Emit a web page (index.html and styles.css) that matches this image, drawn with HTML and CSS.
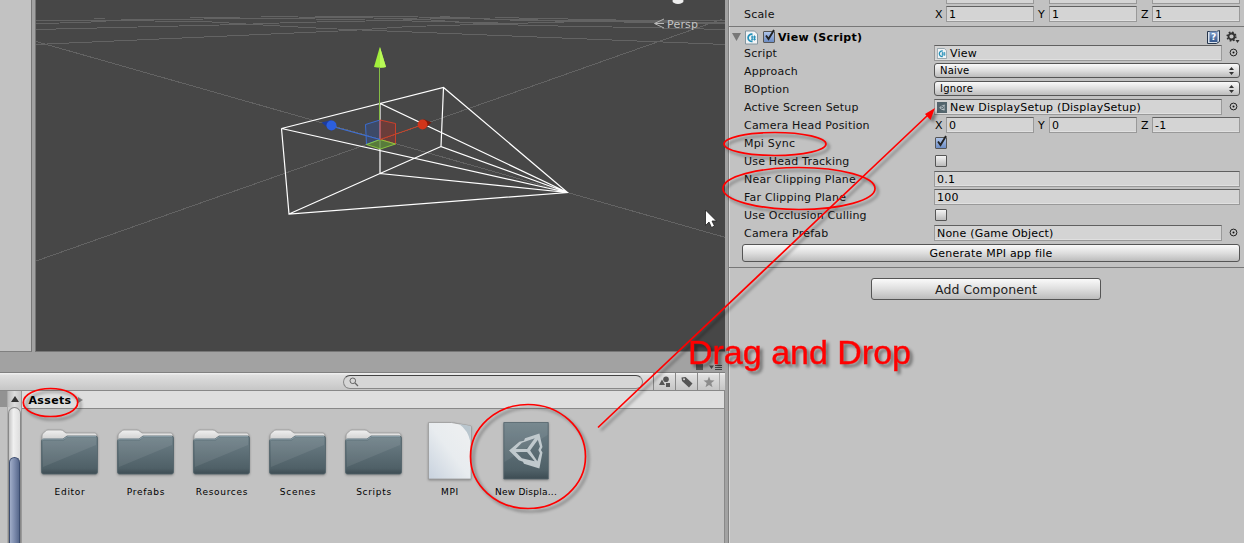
FILE: index.html
```html
<!DOCTYPE html>
<html lang="en">
<head>
<meta charset="utf-8">
<title>Editor</title>
<link rel="stylesheet" href="styles.css">
</head>
<body>
<svg class="defs" width="0" height="0">
  <defs>
    <linearGradient id="slate" x1="0" y1="0" x2="0" y2="1"><stop offset="0" stop-color="#6e8088"/><stop offset=".85" stop-color="#4f6067"/><stop offset="1" stop-color="#3d4c53"/></linearGradient>
    <linearGradient id="tab" x1="0" y1="0" x2="0" y2="1"><stop offset="0" stop-color="#f0f0f0"/><stop offset=".3" stop-color="#c6c6c6"/></linearGradient>
    <linearGradient id="paper" x1="1" y1="0" x2="0" y2="1"><stop offset="0" stop-color="#eff0f1"/><stop offset=".5" stop-color="#e8ecef"/><stop offset="1" stop-color="#c8d2de"/></linearGradient>
    <linearGradient id="book" x1="0" y1="0" x2="0" y2="1"><stop offset="0" stop-color="#82a0cc"/><stop offset="1" stop-color="#35578c"/></linearGradient>
    <symbol id="folder" viewBox="0 0 60 50">
      <path d="M2 44V8q0-1.500 1-2.500L5.500 3Q6.500 2 8 2h13q2 0 3 1.500L26 5h29q2 0 2 3v36z" fill="url(#tab)" stroke="#999" stroke-width=".8"/>
      <path d="M1.500 13q0-2 2-2H23l4-3h28.500q2 0 2 2v34q0 2-2 2h-52q-2 0-2-2z" fill="url(#slate)" stroke="#52636b" stroke-width=".8"/>
      <path d="M3 39V13h20.500l4-3.500H56V17z" fill="#fff" opacity=".08"/>
      <path d="M2 12q1-.8 2-.8h19.500l4-2.700H56" fill="none" stroke="#8fa3ad" stroke-width=".8"/>
    </symbol>
    <symbol id="unity" viewBox="0 0 34 36">
      <path d="M1.500 18 11.500 9.500 16 8.500 17 6 31 1.500 34 14.500 32.500 17.500 34 20 31 35.500 16 31 15 29 11 27.500z M6.500 18 14 25.500 26.500 28.500 19 19.500H8z M8 16.500H19L26.500 6 14 10.500z M22 18 29 28.500 31.500 20.500 30 17.500 31.500 14 29.500 7.500z" fill="#c0c9cd" fill-rule="evenodd"/>
    </symbol>
    <symbol id="cs" viewBox="0 0 13 14">
      <path d="M.5.5h9l3 3v10H.5z" fill="#f2f4f6" stroke="#8296a0"/>
      <path d="M7.500 3.800A3.600 3.600 0 1 0 7.500 10.800" fill="none" stroke="#2490b8" stroke-width="1.700"/>
      <path d="M7.200 5v5M9.500 5v5M6 6.500h5M6 8.700h5" stroke="#2490b8" stroke-width="1"/>
    </symbol>
    <symbol id="tick" viewBox="0 0 12 13"><path d="M2.500 6.500 5 10 10.500 1" fill="none" stroke="#222" stroke-width="1.900"/></symbol>
    <symbol id="target" viewBox="0 0 9 9"><circle cx="4.500" cy="4.500" r="3.400" fill="none" stroke="#222"/><circle cx="4.500" cy="4.500" r="1" fill="#111"/></symbol>
    <symbol id="updown" viewBox="0 0 5 8"><path d="M0 3 2.500 0 5 3zM0 5h5L2.500 8z" fill="#333"/></symbol>
  </defs>
</svg>

<div class="editor">
  <div class="left">
    <div class="upper">
      <div class="hierarchy"></div>
      <svg class="scene" viewBox="36 0 689 351" width="689" height="351">
        <g class="grid">
          <path d="M36 41.500 725 237.300M36 261 722 19.200"/>
          <path d="M36 44.500 350 30.500M374 30.500 725 44.500M36 29.500 240 24.500 293 22.500 390 20.500 470 17.500"/>
          <path d="M36 20.500H105L203 21.500 280 26 325 28.500 374 30.500M36 23.500 84 22.500 129 19.500 280 18.500 390 16.500"/>
          <path d="M350 30.500 410 26.500 510 23.500 620 20.500M94 18.500H105M261 16.500 410 18.500 480 23.500 530 25.500 640 27.500 725 29.500"/>
          <path d="M190 17.500 290 18.500 390 20.500 520 23.500M315 16.500H402L500 19.500 725 22.500M440 16.500 520 20.500 725 23.500M495 17.500 640 20.500H725"/>
        </g>
        <path class="wire" d="M567.500 192.500 281.500 128.500 443.500 87.500 567.500 192.500 289 214 281.500 128.500M443.500 87.500 441 146.500 567.500 192.500 380 173.500V103.500L567.500 192.500M289 214 380 173.500 441 146.500"/>
        <path d="M365.500 124.500 380 120v19.500l-13.500 5z" fill="#2f4f9c" fill-opacity=".4" stroke="#3a70dc" stroke-width=".9"/>
        <path d="m380 120 15.500 3.500V144L380 139.500z" fill="#a03028" fill-opacity=".4" stroke="#d84028" stroke-width=".9"/>
        <path d="m366.500 144.500 13.500-5 15.500 4.500-15 5z" fill="#5c8838" fill-opacity=".8" stroke="#90d040" stroke-width=".9"/>
        <path d="M379.500 68v52" stroke="#86bd46"/>
        <path d="M336 127.500 380 139.500" stroke="#3b70dc"/><path d="M380 139.500 419 126" stroke="#cc4023"/>
        <path d="M379.800 47 374 67q6 1.500 12 0z" fill="#a2ee3c"/><path d="M380 47v20.500q4 0 6-.5z" fill="#b9fa57"/>
        <path d="m321.500 122.500 10-2.500v11z" fill="#1c3ca0"/><circle cx="331.500" cy="125.500" r="5" fill="#2c5fe0"/>
        <path d="m431.500 122.500-8-3.500v11z" fill="#7c1a0c"/><circle cx="422.500" cy="124.500" r="4.900" fill="#d2351a"/>
        <ellipse cx="678" cy="1" rx="5.500" ry="3" fill="#eee"/>
        <path d="M664 19 654.500 23.500 664 28M655 23.500h9" fill="none" stroke="#b8b8b8"/>
        <text class="persp" x="667" y="28" textLength="31">Persp</text>
        <path d="M705.500 210v15.500l3.500-3.500 2.500 5.500 3-1.500-2.500-5h4.500z" fill="#fff" stroke="#222" stroke-width=".8"/>
      </svg>
    </div>
    <div class="strip">
      <svg width="26" height="14" viewBox="0 0 26 14"><path d="M0 6h7v6H0z" fill="#555"/><path d="M13 7.500h5L15.500 11z" fill="#444"/><path d="M19 7.500h8M19 9.500h8M19 11.500h8" stroke="#444"/></svg>
    </div>
    <div class="toolbar">
      <div class="search"><svg width="10" height="10" viewBox="0 0 10 10"><circle cx="3.800" cy="3.800" r="2.800" fill="none" stroke="#666"/><path d="m6 6 3 3" stroke="#666" stroke-width="1.300"/></svg></div>
      <div class="filters">
        <span><svg width="12" height="12" viewBox="0 0 12 12"><circle cx="7" cy="3.200" r="2.800" fill="#555"/><path d="M0 9 3 3.500 6 9zM7 7h4v4H7z" fill="#555"/></svg></span>
        <span><svg width="12" height="12" viewBox="0 0 12 12"><path fill-rule="evenodd" d="M.5 1.500 4.500 1l7 6.500-3.500 4-7-6.500zM3 2.200a1 1 0 1 0 .1 2 1 1 0 0 0-.1-2" fill="#555"/></svg></span>
        <span><svg width="12" height="12" viewBox="0 0 12 12"><path d="m6 .5 1.500 3.800 4 .2-3.200 2.600 1.200 4.100L6 8.900l-3.500 2.300 1.200-4.100L.5 4.500l4-.2z" fill="#8c8c8c"/></svg></span>
      </div>
    </div>
    <div class="project">
      <div class="tree"></div>
      <div class="scroll"><div class="up"><svg width="8" height="6" viewBox="0 0 8 6"><path d="M4 0 8 6H0z" fill="#333"/></svg></div><div class="track"><div class="thumb"></div></div></div>
      <div class="browser">
        <div class="crumb"><b>Assets</b><svg width="5" height="6" viewBox="0 0 5 6"><path d="M0 0 5 3 0 6z" fill="#888"/></svg></div>
        <div class="assets">
          <div class="asset"><svg class="fold"><use href="#folder"/></svg><span>Editor</span></div>
          <div class="asset"><svg class="fold"><use href="#folder"/></svg><span>Prefabs</span></div>
          <div class="asset"><svg class="fold"><use href="#folder"/></svg><span>Resources</span></div>
          <div class="asset"><svg class="fold"><use href="#folder"/></svg><span>Scenes</span></div>
          <div class="asset"><svg class="fold"><use href="#folder"/></svg><span>Scripts</span></div>
          <div class="asset"><svg class="file" viewBox="0 0 46 60"><path d="M1.500 1.500h23l19.500 3.500v53H1.500z" fill="url(#paper)" stroke="#999" stroke-width=".8"/><path d="M32 3 43.500 5v16Q41 9 32 3" fill="#b9c6ce"/></svg><span>MPI</span></div>
          <div class="asset cut"><svg class="file" viewBox="0 0 46 60"><path d="M.8 1.500h44.500v56.500H.8z" fill="url(#slate)" stroke="#56666d" stroke-width=".8"/><path d="M1.500 41V2h43v12z" fill="#fff" opacity=".07"/><use href="#unity" x="4" y="11" width="36" height="37"/></svg><span>New Displa...</span></div>
        </div>
      </div>
    </div>
  </div>
  <div class="inspector">
    <div class="clip"><p></p><p></p><p></p></div>
    <div class="row"><span>Scale</span><div class="vec"><i>X</i><p>1</p><i>Y</i><p>1</p><i>Z</i><p>1</p></div></div>
    <div class="head">
      <svg width="9" height="8" viewBox="0 0 9 8"><path d="M0 0h9L4.500 8z" fill="#777"/></svg>
      <svg width="13" height="15"><use href="#cs"/></svg>
      <em class="box on"><svg><use href="#tick"/></svg></em>
      <b>View (Script)</b>
      <svg class="help" width="13" height="14" viewBox="0 0 13 14"><path d="M.5 1.500h9l3-1v11l-3 2h-9z" fill="#d8e0ea" stroke="#26364c"/><path d="M2.500 1.500h8v10.500h-8z" fill="url(#book)"/><text x="4" y="10" class="q">?</text></svg>
      <svg width="14" height="13" viewBox="0 0 14 13"><circle cx="5.500" cy="5.500" r="3" fill="none" stroke="#333" stroke-width="1.800"/><circle cx="5.500" cy="5.500" r="4.300" fill="none" stroke="#333" stroke-width="1.600" stroke-dasharray="1.700 1.680"/><path d="M9.500 9h4l-2 3z" fill="#333"/></svg>
    </div>
    <div class="row"><span>Script</span><div class="obj"><p><svg width="10" height="11"><use href="#cs"/></svg>View</p><svg class="pick"><use href="#target"/></svg></div></div>
    <div class="row"><span>Approach</span><div class="pop">Naive<svg width="5" height="8"><use href="#updown"/></svg></div></div>
    <div class="row"><span>BOption</span><div class="pop">Ignore<svg width="5" height="8"><use href="#updown"/></svg></div></div>
    <div class="row"><span>Active Screen Setup</span><div class="obj"><p><svg width="10" height="11" viewBox="0 0 10 11"><path d="M0 0h10v11H0z" fill="#53656d"/><use href="#unity" x="2" y="2" width="6" height="7"/></svg>New DisplaySetup (DisplaySetup)</p><svg class="pick"><use href="#target"/></svg></div></div>
    <div class="row"><span>Camera Head Position</span><div class="vec"><i>X</i><p>0</p><i>Y</i><p>0</p><i>Z</i><p>-1</p></div></div>
    <div class="row"><span>Mpi Sync</span><em class="box on"><svg><use href="#tick"/></svg></em></div>
    <div class="row"><span>Use Head Tracking</span><em class="box"></em></div>
    <div class="row"><span>Near Clipping Plane</span><p>0.1</p></div>
    <div class="row"><span>Far Clipping Plane</span><p>100</p></div>
    <div class="row"><span>Use Occlusion Culling</span><em class="box"></em></div>
    <div class="row"><span>Camera Prefab</span><div class="obj"><p>None (Game Object)</p><svg class="pick"><use href="#target"/></svg></div></div>
    <div class="button gen">Generate MPI app file</div>
    <div class="rule"></div>
    <div class="button add">Add Component</div>
  </div>
</div>

<svg class="notes" width="1244" height="543">
  <g fill="none" stroke="#f00" stroke-width="1.700">
    <ellipse cx="50.500" cy="402.500" rx="27.200" ry="14"/>
    <ellipse cx="775" cy="144" rx="51" ry="11.500"/>
    <ellipse cx="799" cy="188.500" rx="76" ry="21"/>
    <ellipse cx="528" cy="456.500" rx="57.500" ry="52"/>
    <path d="M598 427.500 928 115"/>
  </g>
  <path d="m935 108-10 6 5.500 6z" fill="#f00"/>
  <text x="688" y="364" textLength="223">Drag and Drop</text>
</svg>
</body>
</html>
```

FILE: styles.css
```css
* { box-sizing: border-box; }
body { margin: 0; background: #a2a2a2; font: 11px "DejaVu Sans", sans-serif; color: #000; overflow: hidden; }
svg { display: block; flex: none; }
.defs { position: absolute; }
p, i, em { margin: 0; font-style: normal; }
.editor { display: flex; width: 1244px; height: 543px; overflow: hidden; }

.left { width: 725px; display: flex; flex-direction: column; }
.upper { display: flex; height: 352px; }
.hierarchy { width: 32px; background: #c2c2c2; border-right: 1px solid #777; border-bottom: 1px solid #808080; }
.scene { margin-left: 3px; border-left: 1px solid #777; border-bottom: 1px solid #777; width: 690px; height: 352px; background: #474747; }
.grid { fill: none; stroke: #636363; stroke-width: 1; shape-rendering: crispEdges; }
.wire { fill: none; stroke: #fff; stroke-width: 1.2; }
.persp { font-size: 11px; fill: #c4c4c4; }
.strip { height: 20px; display: flex; justify-content: flex-end; align-items: flex-end; padding-right: 3px; background: #a2a2a2; }

.toolbar { height: 19px; border-top: 1px solid #808080; border-bottom: 1px solid #888; background: linear-gradient(#f2f2f2, #dedede 15%, #c6c6c6); display: flex; align-items: center; justify-content: flex-end; }
.search { width: 300px; height: 14px; border: 1px solid #888; border-top-color: #444; border-radius: 7px; background: #d6d6d6; display: flex; align-items: center; padding-left: 5px; margin-right: 10px; }
.filters { display: flex; width: 72px; height: 17px; }
.filters span { width: 22px; border-left: 1px solid #888; display: flex; align-items: center; justify-content: center; }
.filters span:last-child { border-right: 1px solid #aaa; width: 23px; }

.project { flex: 1; display: flex; border-right: 1px solid #888; min-height: 0; overflow: hidden; }
.tree { width: 7px; background: linear-gradient(#929292 16px, #c2c2c2 16px); }
.scroll { width: 15px; border-left: 1px solid #aaa; border-right: 1px solid #999; background: #ccc; display: flex; flex-direction: column; }
.up { height: 16px; flex: none; display: flex; align-items: center; justify-content: center; background: linear-gradient(90deg, #bbb, #ddd, #c4c4c4); }
.track { flex: 1; border: 1px solid #888; border-bottom: 0; border-radius: 7px 7px 0 0; background: linear-gradient(90deg, #c4c4c4, #f0f0f0 40%, #ddd); padding-top: 49px; display: flex; }
.thumb { flex: 1; border: 1px solid #3c4d70; border-bottom: 0; border-radius: 6px 6px 0 0; background: linear-gradient(90deg, #a0adc8, #7988aa 55%, #58698c); }
.browser { flex: 1; background: #c2c2c2; }
.crumb { height: 18px; display: flex; align-items: center; gap: 7px; padding: 1px 0 0 6.500px; background: #dedede; border-bottom: 1px solid #888; letter-spacing: .35px; }
.assets { display: flex; padding: 12px 0 0 10px; }
.asset { width: 76px; display: flex; flex-direction: column; align-items: center; font-size: 9px; letter-spacing: .7px; }
.asset svg { margin-bottom: 5px; filter: drop-shadow(0 1px 1px #888); }
.asset span { line-height: 12px; white-space: nowrap; }
.cut span { letter-spacing: .25px; }
.asset .fold { width: 60px; height: 50px; margin: 7px 0 8px; }
.file { width: 46px; height: 60px; }

.inspector { flex: 1; margin-left: 3px; border-left: 1px solid #808080; background: #c2c2c2; box-shadow: inset 1px 0 #d8d8d8; letter-spacing: .2px; }
.row { height: 18px; display: grid; grid-template-columns: 190px 306px; padding-left: 15px; align-items: start; white-space: nowrap; }
.row > span { line-height: 18px; color: #111; }
.row p { height: 16px; border: 1px solid #999; border-top: 1px solid #606060; background: #d4d4d4; box-shadow: inset 0 -1px #e0e0e0; line-height: 15px; padding-left: 2px; display: flex; align-items: center; gap: 3px; }
.clip { height: 6px; display: grid; grid-template-columns: 88px 88px 88px; gap: 15px; padding-left: 217px; align-items: start; }
.clip p { height: 4px; border: 1px solid #999; border-top: 0; background: #d4d4d4; }
.clip + .row { height: 20px; }
.vec { display: grid; grid-template-columns: 12px 88px 15px 88px 15px 88px; line-height: 17px; }
.vec i { padding-left: 1px; }
.vec i:nth-child(n+2) { padding-left: 4px; }
.obj { display: grid; grid-template-columns: 288px 18px; }
.pick { width: 9px; height: 9px; margin: 3px 0 0 7px; }
.pop, .button { border: 1px solid #555; border-radius: 3px; background: linear-gradient(#fafafa, #dedede 50%, #bcbcbc); }
.pop { height: 15px; font-size: 10px; line-height: 13px; display: flex; justify-content: space-between; align-items: center; padding: 0 5px; }
.box { width: 12px; height: 12px; margin: 2px 0 0 1px; border: 1px solid #555; border-radius: 1px; background: linear-gradient(#f4f4f4, #bbb); display: block; }
.box svg { width: 13px; height: 13px; margin: -3px 0 0 -1px; }
.on { background: linear-gradient(#aec4ea, #6c8cc4); }
.head { height: 19px; border-top: 1px solid #777; display: flex; align-items: center; padding: 2px 4px 0 3px; letter-spacing: .3px; }
.head svg:nth-of-type(2) { margin-left: 4px; }
.head .box { margin: 0 3px 0 5px; }
.head .help { margin: 0 6px 0 auto; }
.q { font-size: 9px; fill: #fff; font-weight: bold; }
.button { text-align: center; }
.gen { width: 498px; height: 18px; margin: 1px 0 0 13px; line-height: 17px; }
.rule { height: 1px; background: #777; margin-top: 5px; }
.add { width: 230px; height: 22px; margin: 10px 0 0 142px; line-height: 21px; font-size: 12.5px; letter-spacing: .1px; color: #222; }

.notes { position: absolute; left: 0; top: 0; filter: drop-shadow(3px 3px 1.500px rgba(0,0,0,.4)); }
.notes text { font: 34px "Liberation Sans", sans-serif; fill: #f00; stroke: #f00; stroke-width: .4; }
```
